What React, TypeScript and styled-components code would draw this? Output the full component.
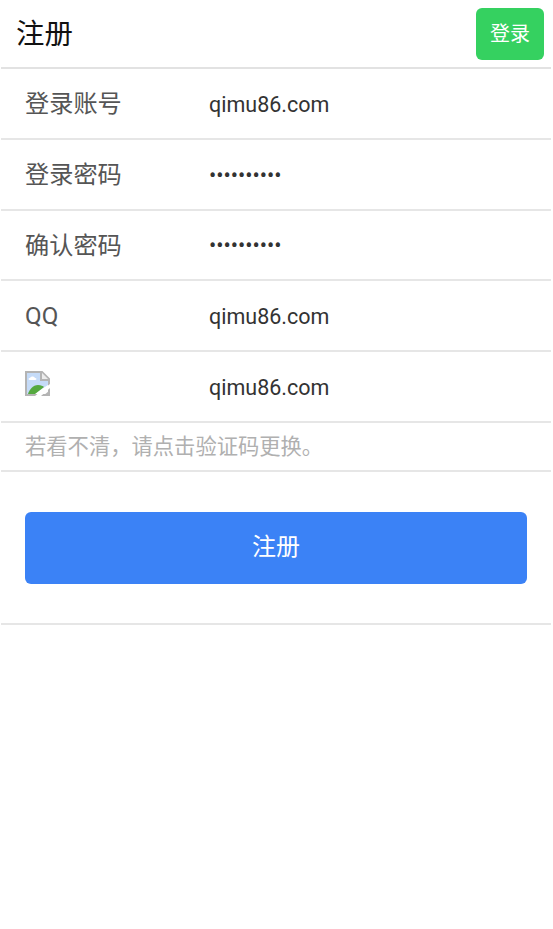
import { createGlobalStyle, styled } from "styled-components";

const Global = createGlobalStyle`
  html, body {
    margin: 0;
    padding: 0;
    background: #fff;
    font-family: Roboto, "Noto Sans CJK SC", sans-serif;
  }
`;

const Page = styled.div`
  width: 550px;
  margin-left: 1px;
`;

const Header = styled.header`
  height: 69px;
  box-sizing: border-box;
  padding: 8px 7px 7px 15px;
  display: flex;
  align-items: center;
  justify-content: space-between;
  border-bottom: 2px solid #e2e2e2;
`;

const Title = styled.h1`
  margin: 0 0 5px;
  font-size: 28.4px;
  font-weight: 400;
  color: #111;
`;

const LoginLink = styled.a`
  width: 68px;
  height: 52px;
  padding-bottom: 4px;
  box-sizing: border-box;
  display: flex;
  align-items: center;
  justify-content: center;
  border-radius: 6px;
  background: #35d160;
  color: #fff;
  font-size: 20px;
`;

const Row = styled.label`
  height: 70.8px;
  box-sizing: border-box;
  padding-left: 24px;
  display: flex;
  align-items: center;
  border-bottom: 2px solid #e6e6e6;
`;

const Label = styled.span<{ $latin?: boolean }>`
  width: 184px;
  padding-bottom: ${(p) => (p.$latin ? 0 : 3)}px;
  font-size: 24.2px;
  color: #555;
`;

const Field = styled.input`
  flex: 1;
  min-width: 0;
  padding: 2px 0 0;
  border: 0;
  outline: 0;
  background: none;
  font: 400 21.5px Roboto, "Noto Sans CJK SC", sans-serif;
  color: #333;
`;

const Captcha = styled.svg`
  display: block;
  width: 25px;
  height: 25px;
  margin-top: -3px;
`;

const Hint = styled.p`
  height: 49.5px;
  box-sizing: border-box;
  margin: 0;
  padding: 0 0 4px 24px;
  display: flex;
  align-items: center;
  border-bottom: 2px solid #e6e6e6;
  font-size: 21.3px;
  color: #b0b0b0;
`;

const Actions = styled.div`
  height: 153px;
  box-sizing: border-box;
  padding: 39.5px 24px 0;
  border-bottom: 2px solid #e6e6e6;
`;

const Submit = styled.button`
  width: 100%;
  height: 72px;
  padding: 0 0 6px;
  border: 0;
  border-radius: 6px;
  background: #3b82f6;
  color: #fff;
  font: 400 24px Roboto, "Noto Sans CJK SC", sans-serif;
`;

const rows = [
  { label: "登录账号", type: "text" },
  { label: "登录密码", type: "password" },
  { label: "确认密码", type: "password" },
  { label: "QQ", type: "text", latin: true },
];

export default function App() {
  return (
    <Page>
      <Global />
      <Header>
        <Title>注册</Title>
        <LoginLink>登录</LoginLink>
      </Header>
      {rows.map((row) => (
        <Row key={row.label}>
          <Label $latin={row.latin}>{row.label}</Label>
          <Field type={row.type} value="qimu86.com" readOnly />
        </Row>
      ))}
      <Row>
        <Label>
          <Captcha viewBox="0 0 25 25">
            <path d="M1 1h16l7 7v16H1z" fill="#fff" stroke="#b4b4b4" strokeWidth="2" />
            <path d="M2 2h14l7 7v5L9 23H2z" fill="#c5dbf8" />
            <path d="M5 7c1-2 4-2 5 0 2 0 2 2 0 2H5C3 9 3 7 5 7z" fill="#fff" />
            <path d="M3 23c1-4 5-9 10-9 3 0 5 1 6 2l-9 7z" fill="#55a93f" />
            <path d="M16 1v8h8" fill="#ececec" stroke="#b4b4b4" strokeWidth="2" />
            <path d="M10 25 25 13v4L16 25z" fill="#fff" />
            <path d="M18 25l7-6v6z" fill="#b4b4b4" />
          </Captcha>
        </Label>
        <Field type="text" value="qimu86.com" readOnly />
      </Row>
      <Hint>若看不清，请点击验证码更换。</Hint>
      <Actions>
        <Submit>注册</Submit>
      </Actions>
    </Page>
  );
}
